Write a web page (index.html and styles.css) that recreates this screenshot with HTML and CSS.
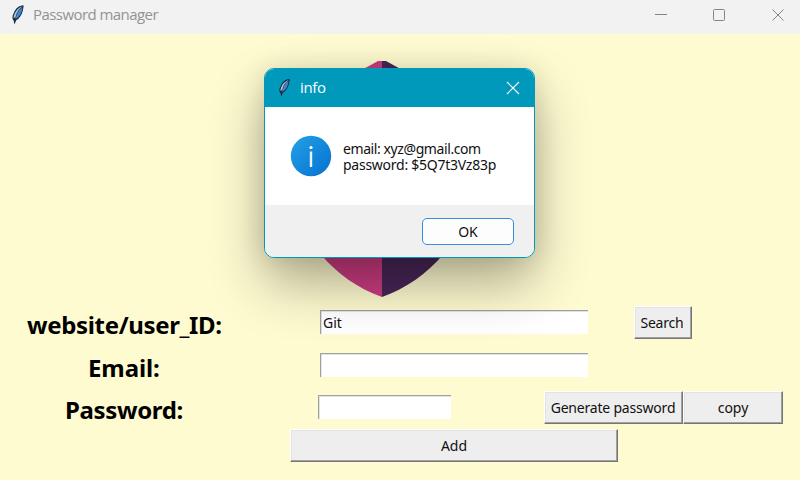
FILE: index.html
```html
<!DOCTYPE html>
<html lang="en">
<head>
<meta charset="utf-8">
<title>Password manager</title>
<link rel="stylesheet" href="styles.css">
</head>
<body>
<svg width="0" height="0" class="defs" aria-hidden="true">
  <symbol id="feather" viewBox="0 0 14 20">
    <path d="M12.500 .3C8 .5 4.500 3.500 2.800 8C1 11 1 13.500 2.600 15.500L3.600 19.500L5 15.500C8.500 13.500 11 9.500 11.800 5.500C12.200 3.500 12.800 1.500 12.500 .3Z" fill="#1a2a3c"/>
    <path d="M11.300 1.300C6.500 3 3.200 7.500 2.500 13L4.500 12.500C5.500 7.500 7.500 4.500 11.300 1.300Z" fill="#a3c4dc"/>
    <path d="M11.300 2C7.500 5 5.500 9 4.300 14.300C8.500 12 11 8 11.300 2Z" fill="#4384d2"/>
  </symbol>
</svg>
<main class="window">
  <header class="titlebar">
    <svg class="feather"><use href="#feather"/></svg>
    <span class="title">Password manager</span>
    <svg class="controls" width="134" height="14" viewBox="0 0 134 14">
      <path d="M4 6.500H16M121.500 1.500L132.500 12.500M132.500 1.500L121.500 12.500"/>
      <rect x="62.500" y="1.500" width="11" height="11" rx="1"/>
    </svg>
  </header>
  <div class="logo">
    <svg width="192" height="236" viewBox="0 0 192 236">
      <path fill="#cb3c80" d="M96 0H92Q46 27 0 30V90C0 163 40 216 96 236Z"/>
      <path fill="#482657" d="M96 0H100Q146 27 192 30V90C192 163 152 216 96 236Z"/>
    </svg>
  </div>
  <section class="form">
    <div class="row"><label class="l1">website/user_ID:</label><div class="entry wide">Git</div><button class="search">Search</button></div>
    <div class="row"><label class="l2">Email:</label><div class="entry wide"></div></div>
    <div class="row"><label class="l3">Password:</label><div class="entry narrow"></div><button class="generate">Generate password</button><button class="copy">copy</button></div>
    <button class="add">Add</button>
  </section>
</main>
<div class="dialog">
  <div class="dialog-title">
    <svg class="feather"><use href="#feather"/></svg>
    <span class="name">info</span>
    <svg class="close" width="14" height="14" viewBox="0 0 14 14"><path d="M1 1L13 13M13 1L1 13"/></svg>
  </div>
  <div class="message">
    <svg width="42" height="42" viewBox="0 0 42 42">
      <defs><linearGradient id="blue" x1="0" y1="0" x2="1" y2="1"><stop offset="0" stop-color="#22a2e6"/><stop offset="1" stop-color="#0670d0"/></linearGradient></defs>
      <circle cx="21" cy="21" r="20.200" fill="url(#blue)"/>
      <circle cx="21" cy="12.500" r="1.600" fill="#fff"/>
      <path d="M21 16.500V32" stroke="#e8f6ff" stroke-width="2.400"/>
    </svg>
    <div class="lines">email: xyz@gmail.com<br><span class="secret">password: $5Q7t3Vz83p</span></div>
  </div>
  <div class="actions"><button class="ok">OK</button></div>
</div>
</body>
</html>
```
FILE: styles.css
```css
* { box-sizing: border-box; }
body { margin: 0; overflow: hidden; font: 14px/16px "Noto Sans", "Open Sans", sans-serif; color: #111; }
.defs { position: absolute; }
.window { width: 800px; height: 480px; background: #fffbd0; }
.titlebar { height: 34px; background: #f2f2f2; display: flex; align-items: center; padding: 0 15px 4px 11px; color: #929292; }
.feather { width: 14px; height: 20px; flex: none; }
.title { margin: -2px 0 0 8px; font: 15px/20px "Open Sans", sans-serif; letter-spacing: -.56px; white-space: nowrap; }
.controls { margin-left: auto; fill: none; stroke: #858585; stroke-width: 1; }
.logo { height: 267px; padding: 27px 0 0 286px; }
.logo svg { display: block; }
.row { display: flex; align-items: center; height: 43px; }
.row:nth-child(2) { height: 42px; }
label { font: bold 24px/32px "Noto Sans", sans-serif; color: #000; white-space: nowrap; margin-top: 5px; }
.l1 { margin-left: 27px; width: 293px; letter-spacing: -.34px; }
.l2 { margin-left: 88px; width: 232px; letter-spacing: -.1px; }
.l3 { margin-left: 65px; width: 253px; letter-spacing: -.35px; }
.entry { height: 24px; background: #fff; border-top: 1px solid #a0a0a0; border-left: 1px solid #a0a0a0; box-shadow: inset 1px 1px #e3e3e3; padding: 4px 2px; margin-top: -1px; }
.wide { width: 268px; }
.narrow { width: 133px; }
button { font: 14px/18px "Noto Sans", sans-serif; color: #111; padding: 0; margin: 0; height: 33px; background: #eee; border: 1px solid; border-color: #fff #767676 #767676 #fff; box-shadow: inset -1px -1px #a0a0a0, inset 1px 1px #e3e3e3; white-space: nowrap; }
.search { width: 58px; margin-left: 46px; padding-right: 2px; letter-spacing: -.2px; }
.generate { width: 139px; margin-left: 93px; padding-right: 1px; letter-spacing: -.2px; }
.copy { width: 100px; }
.add { display: block; width: 328px; margin-left: 290px; }
.dialog { position: absolute; left: 264px; top: 68px; width: 271px; height: 190px; border: 1px solid #0099bc; border-radius: 10px; background: #fff; overflow: hidden; box-shadow: 0 26px 54px rgba(0,0,0,.32), 0 0 26px rgba(0,0,0,.11); }
.dialog-title { height: 38px; background: #0099bc; color: #fff; display: flex; align-items: center; padding: 0 14px 0 13px; }
.dialog-title .feather { width: 13px; }
.name { margin: -2px 0 0 9px; font: 15px/20px "Open Sans", sans-serif; letter-spacing: -.35px; }
.close { margin-left: auto; fill: none; stroke: #fff; stroke-width: 1.1; }
.message { height: 98px; display: flex; align-items: center; padding-left: 25px; }
.lines { margin-left: 11px; margin-top: 2px; white-space: nowrap; letter-spacing: -.41px; }
.secret { letter-spacing: -.26px; }
.actions { height: 52px; background: #f0f0f0; padding: 13px 20px 0; display: flex; justify-content: flex-end; }
.ok { width: 92px; height: 27px; background: #fdfdfd; border: 1.5px solid #3c8dd9; border-radius: 5px; box-shadow: none; }
```
